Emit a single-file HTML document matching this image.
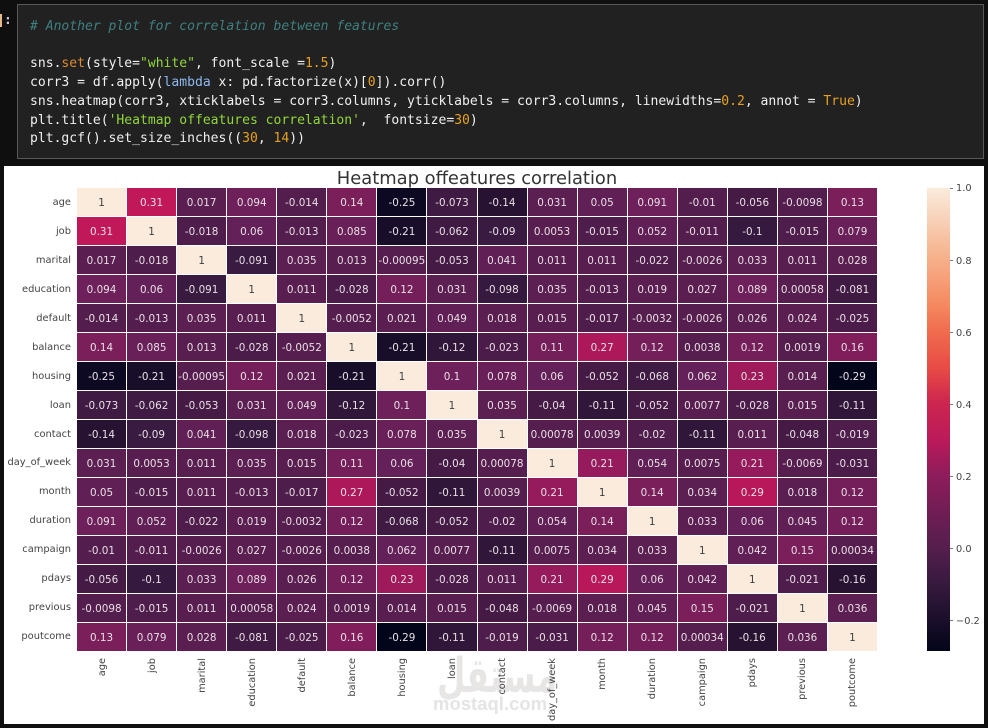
<!DOCTYPE html>
<html><head><meta charset="utf-8"><style>
html,body{margin:0;padding:0;background:#0f0f0f;width:988px;height:728px;overflow:hidden}
#prompt{position:absolute;left:0;top:14px;width:2px;height:13px;background:#e8b98a}
#colon{position:absolute;left:4px;top:13px;font:bold 13px "DejaVu Sans Mono",monospace;color:#c8c8d8}
#cell{position:absolute;left:17px;top:4px;width:965px;height:153px;background:#212121;border:1px solid #585858}
#code{position:absolute;left:30px;top:18px;margin:0;font:13.06px/18.7px "DejaVu Sans Mono","Liberation Mono",monospace;color:#f0f0f0;white-space:pre}
.cm{color:#3f8080;font-style:italic}.st{color:#92d83a}.nm{color:#e8a020}.fn{color:#e08a30}.kw{color:#8fb8f0}
#plot{position:absolute;left:4px;top:166px;width:980px;height:558px;background:#fff}
#title{position:absolute;left:0;top:167px;width:954px;text-align:center;font:17.9px/24px "DejaVu Sans",sans-serif;color:#333}
#hm{position:absolute;left:77px;top:188px;width:800px;height:463px;display:grid;grid-template-columns:repeat(16,1fr);grid-template-rows:repeat(16,1fr);gap:1px;filter:blur(.25px)}
#hm i{font:normal 10.4px/31px "DejaVu Sans",sans-serif;text-align:center;color:#e8dfe5;white-space:nowrap;overflow:visible;height:28px}
.a{background:#03051a}.b{background:#0e0922}.c{background:#190e2a}.d{background:#271232}.e{background:#301739}.f{background:#36193e}.g{background:#391a40}.h{background:#3f1a43}.i{background:#451b46}.j{background:#4b1c4a}.k{background:#4f1d4c}.l{background:#531d4d}.m{background:#561e4e}.n{background:#581e4f}.o{background:#5a1e50}.p{background:#5c1f52}.q{background:#601f55}.r{background:#642058}.s{background:#691f58}.t{background:#6e205a}.u{background:#751f5a}.v{background:#7b1f5b}.w{background:#821d5c}.x{background:#961b5c}.y{background:#9e1a5b}.z{background:#ac1859}.A{background:#b8185a}.B{background:#c1185a}
#hm i.C{background:#faebdd;color:#3f3f3f}
#yl{position:absolute;left:4px;top:189px;width:67px;height:463px;display:flex;flex-direction:column;text-align:right;font:9.9px/28.9px "DejaVu Sans",sans-serif;color:#444}
#yl div{flex:1}
.xl{position:absolute;top:658px;writing-mode:vertical-rl;transform:rotate(180deg);font:9.8px/12px "DejaVu Sans",sans-serif;color:#444;white-space:nowrap}
#cb{position:absolute;left:927px;top:188px;width:23px;height:463px;background:linear-gradient(to top,#03051a 0%,#36193e 14.3%,#561e4e 22.5%,#8e1c5c 38%,#bc1a5a 45.7%,#cd254f 53.5%,#e84a45 61%,#f06c4e 69%,#f58a60 75%,#f6b48f 85.7%,#faebdd 100%)}
.tk{position:absolute;left:950px;width:3px;height:1px;background:#777}
.tl{position:absolute;left:956px;font:9.8px/12px "DejaVu Sans",sans-serif;color:#444}
#wm{position:absolute;left:400px;top:650px;width:170px;height:74px}
</style></head><body>
<div id="prompt"></div><div id="colon">:</div>
<div id="cell"></div>
<pre id="code"><span class="cm"># Another plot for correlation between features</span>

sns.<span class="fn">set</span>(style=<span class="st">"white"</span>, font_scale =<span class="nm">1.5</span>)
corr3 = df.apply(<span class="kw">lambda</span> x: pd.factorize(x)[<span class="nm">0</span>]).corr()
sns.heatmap(corr3, xticklabels = corr3.columns, yticklabels = corr3.columns, linewidths=<span class="nm">0.2</span>, annot = <span class="nm">True</span>)
plt.title(<span class="st">'Heatmap offeatures correlation'</span>,  fontsize=<span class="nm">30</span>)
plt.gcf().set_size_inches((<span class="nm">30</span>, <span class="nm">14</span>))</pre>
<div id="plot"></div>
<div id="title">Heatmap offeatures correlation</div>
<svg id="wm" viewBox="0 0 170 74"><text x="37" y="42" font-family="DejaVu Sans" font-weight="bold" font-size="48" fill="#e8e5e5" textLength="120" lengthAdjust="spacingAndGlyphs" style="direction:ltr;unicode-bidi:normal">مستقل</text><text x="33" y="60" font-family="Liberation Sans" font-weight="bold" font-size="18.5" fill="#e4e4e4">mostaql.com</text></svg>
<div id="yl"><div>age</div><div>job</div><div>marital</div><div>education</div><div>default</div><div>balance</div><div>housing</div><div>loan</div><div>contact</div><div>day_of_week</div><div>month</div><div>duration</div><div>campaign</div><div>pdays</div><div>previous</div><div>poutcome</div></div>
<div id="hm">
<i class="C">1</i><i class="B">0.31</i><i class="o">0.017</i><i class="t">0.094</i><i class="l">-0.014</i><i class="v">0.14</i><i class="b">-0.25</i><i class="h">-0.073</i><i class="d">-0.14</i><i class="p">0.031</i><i class="q">0.05</i><i class="t">0.091</i><i class="l">-0.01</i><i class="i">-0.056</i><i class="l">-0.0098</i><i class="v">0.13</i>
<i class="B">0.31</i><i class="C">1</i><i class="k">-0.018</i><i class="r">0.06</i><i class="l">-0.013</i><i class="s">0.085</i><i class="c">-0.21</i><i class="h">-0.062</i><i class="g">-0.09</i><i class="n">0.0053</i><i class="k">-0.015</i><i class="q">0.052</i><i class="l">-0.011</i><i class="f">-0.1</i><i class="k">-0.015</i><i class="s">0.079</i>
<i class="o">0.017</i><i class="k">-0.018</i><i class="C">1</i><i class="g">-0.091</i><i class="p">0.035</i><i class="n">0.013</i><i class="m">-0.00095</i><i class="i">-0.053</i><i class="q">0.041</i><i class="n">0.011</i><i class="n">0.011</i><i class="k">-0.022</i><i class="m">-0.0026</i><i class="p">0.033</i><i class="n">0.011</i><i class="o">0.028</i>
<i class="t">0.094</i><i class="r">0.06</i><i class="g">-0.091</i><i class="C">1</i><i class="n">0.011</i><i class="j">-0.028</i><i class="u">0.12</i><i class="p">0.031</i><i class="f">-0.098</i><i class="p">0.035</i><i class="l">-0.013</i><i class="o">0.019</i><i class="o">0.027</i><i class="t">0.089</i><i class="m">0.00058</i><i class="h">-0.081</i>
<i class="l">-0.014</i><i class="l">-0.013</i><i class="p">0.035</i><i class="n">0.011</i><i class="C">1</i><i class="m">-0.0052</i><i class="o">0.021</i><i class="q">0.049</i><i class="o">0.018</i><i class="n">0.015</i><i class="k">-0.017</i><i class="m">-0.0032</i><i class="m">-0.0026</i><i class="o">0.026</i><i class="o">0.024</i><i class="j">-0.025</i>
<i class="v">0.14</i><i class="s">0.085</i><i class="n">0.013</i><i class="j">-0.028</i><i class="m">-0.0052</i><i class="C">1</i><i class="c">-0.21</i><i class="e">-0.12</i><i class="j">-0.023</i><i class="u">0.11</i><i class="z">0.27</i><i class="u">0.12</i><i class="m">0.0038</i><i class="u">0.12</i><i class="m">0.0019</i><i class="w">0.16</i>
<i class="b">-0.25</i><i class="c">-0.21</i><i class="m">-0.00095</i><i class="u">0.12</i><i class="o">0.021</i><i class="c">-0.21</i><i class="C">1</i><i class="t">0.1</i><i class="s">0.078</i><i class="r">0.06</i><i class="i">-0.052</i><i class="h">-0.068</i><i class="r">0.062</i><i class="y">0.23</i><i class="n">0.014</i><i class="a">-0.29</i>
<i class="h">-0.073</i><i class="h">-0.062</i><i class="i">-0.053</i><i class="p">0.031</i><i class="q">0.049</i><i class="e">-0.12</i><i class="t">0.1</i><i class="C">1</i><i class="p">0.035</i><i class="i">-0.04</i><i class="e">-0.11</i><i class="i">-0.052</i><i class="n">0.0077</i><i class="j">-0.028</i><i class="n">0.015</i><i class="e">-0.11</i>
<i class="d">-0.14</i><i class="g">-0.09</i><i class="q">0.041</i><i class="f">-0.098</i><i class="o">0.018</i><i class="j">-0.023</i><i class="s">0.078</i><i class="p">0.035</i><i class="C">1</i><i class="m">0.00078</i><i class="m">0.0039</i><i class="k">-0.02</i><i class="e">-0.11</i><i class="n">0.011</i><i class="i">-0.048</i><i class="k">-0.019</i>
<i class="p">0.031</i><i class="n">0.0053</i><i class="n">0.011</i><i class="p">0.035</i><i class="n">0.015</i><i class="u">0.11</i><i class="r">0.06</i><i class="i">-0.04</i><i class="m">0.00078</i><i class="C">1</i><i class="x">0.21</i><i class="q">0.054</i><i class="n">0.0075</i><i class="x">0.21</i><i class="m">-0.0069</i><i class="j">-0.031</i>
<i class="q">0.05</i><i class="k">-0.015</i><i class="n">0.011</i><i class="l">-0.013</i><i class="k">-0.017</i><i class="z">0.27</i><i class="i">-0.052</i><i class="e">-0.11</i><i class="m">0.0039</i><i class="x">0.21</i><i class="C">1</i><i class="v">0.14</i><i class="p">0.034</i><i class="A">0.29</i><i class="o">0.018</i><i class="u">0.12</i>
<i class="t">0.091</i><i class="q">0.052</i><i class="k">-0.022</i><i class="o">0.019</i><i class="m">-0.0032</i><i class="u">0.12</i><i class="h">-0.068</i><i class="i">-0.052</i><i class="k">-0.02</i><i class="q">0.054</i><i class="v">0.14</i><i class="C">1</i><i class="p">0.033</i><i class="r">0.06</i><i class="q">0.045</i><i class="u">0.12</i>
<i class="l">-0.01</i><i class="l">-0.011</i><i class="m">-0.0026</i><i class="o">0.027</i><i class="m">-0.0026</i><i class="m">0.0038</i><i class="r">0.062</i><i class="n">0.0077</i><i class="e">-0.11</i><i class="n">0.0075</i><i class="p">0.034</i><i class="p">0.033</i><i class="C">1</i><i class="q">0.042</i><i class="v">0.15</i><i class="m">0.00034</i>
<i class="i">-0.056</i><i class="f">-0.1</i><i class="p">0.033</i><i class="t">0.089</i><i class="o">0.026</i><i class="u">0.12</i><i class="y">0.23</i><i class="j">-0.028</i><i class="n">0.011</i><i class="x">0.21</i><i class="A">0.29</i><i class="r">0.06</i><i class="q">0.042</i><i class="C">1</i><i class="k">-0.021</i><i class="d">-0.16</i>
<i class="l">-0.0098</i><i class="k">-0.015</i><i class="n">0.011</i><i class="m">0.00058</i><i class="o">0.024</i><i class="m">0.0019</i><i class="n">0.014</i><i class="n">0.015</i><i class="i">-0.048</i><i class="m">-0.0069</i><i class="o">0.018</i><i class="q">0.045</i><i class="v">0.15</i><i class="k">-0.021</i><i class="C">1</i><i class="p">0.036</i>
<i class="v">0.13</i><i class="s">0.079</i><i class="o">0.028</i><i class="h">-0.081</i><i class="j">-0.025</i><i class="w">0.16</i><i class="a">-0.29</i><i class="e">-0.11</i><i class="k">-0.019</i><i class="j">-0.031</i><i class="u">0.12</i><i class="u">0.12</i><i class="m">0.00034</i><i class="d">-0.16</i><i class="p">0.036</i><i class="C">1</i>
</div>
<div class="xl" style="left:97px">age</div>
<div class="xl" style="left:147px">job</div>
<div class="xl" style="left:197px">marital</div>
<div class="xl" style="left:247px">education</div>
<div class="xl" style="left:297px">default</div>
<div class="xl" style="left:347px">balance</div>
<div class="xl" style="left:397px">housing</div>
<div class="xl" style="left:447px">loan</div>
<div class="xl" style="left:497px">contact</div>
<div class="xl" style="left:547px">day_of_week</div>
<div class="xl" style="left:597px">month</div>
<div class="xl" style="left:647px">duration</div>
<div class="xl" style="left:697px">campaign</div>
<div class="xl" style="left:747px">pdays</div>
<div class="xl" style="left:797px">previous</div>
<div class="xl" style="left:847px">poutcome</div>
<div id="cb"></div>
<div class="tk" style="top:188px"></div><div class="tl" style="top:183px">1.0</div>
<div class="tk" style="top:260px"></div><div class="tl" style="top:256px">0.8</div>
<div class="tk" style="top:332px"></div><div class="tl" style="top:328px">0.6</div>
<div class="tk" style="top:404px"></div><div class="tl" style="top:400px">0.4</div>
<div class="tk" style="top:476px"></div><div class="tl" style="top:472px">0.2</div>
<div class="tk" style="top:548px"></div><div class="tl" style="top:544px">0.0</div>
<div class="tk" style="top:620px"></div><div class="tl" style="top:616px">−0.2</div>
</body></html>
